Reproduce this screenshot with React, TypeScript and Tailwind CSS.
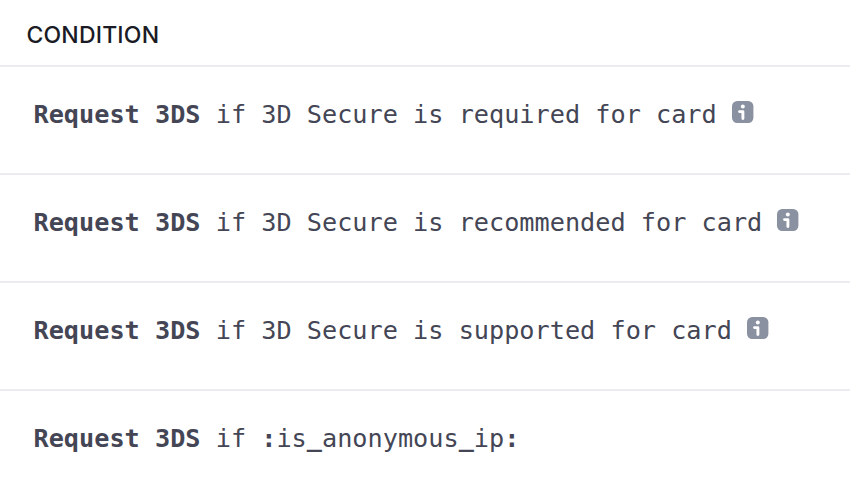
import React from "react";

const rules = [
  { text: "3D Secure is required for card", info: true },
  { text: "3D Secure is recommended for card", info: true },
  { text: "3D Secure is supported for card", info: true },
  { text: ":is_anonymous_ip:", info: false },
];

function InfoIcon() {
  return (
    <svg width="22" height="22" viewBox="0 0 22 22" className="ml-[15px] mt-[2px] shrink-0">
      <rect width="21.4" height="22" rx="5.2" fill="#8a91a0" />
      <circle cx="10.8" cy="5.5" r="2" fill="#fff" />
      <path d="M7.5 10.6h3.4v6.9" fill="none" stroke="#fff" strokeWidth="2.9" strokeLinecap="round" strokeLinejoin="round" />
    </svg>
  );
}

function Expression({ text }: { text: string }) {
  return (
    <span>
      {text.split(/([:_])/).map((part, i) => {
        if (part === ":") return <b key={i}>{part}</b>;
        if (part === "_") return <b key={i} className="relative -top-px">{part}</b>;
        return part;
      })}
    </span>
  );
}

export default function App() {
  return (
    <main className="h-[496px] w-[850px] overflow-hidden bg-white">
      <header className="flex h-[67px] items-center border-b-2 border-[#ebebf1] pl-[26.4px] pt-[5px] font-['Inter',sans-serif] text-[23px] font-[450] tracking-[0.2px] text-[#1a1b25]">
        CONDITION
      </header>
      {rules.map((rule) => (
        <div
          key={rule.text}
          className="flex h-[108px] items-start whitespace-pre border-b-2 border-[#ebebf1] pl-[33.5px] pt-[32px] font-['DejaVu_Sans_Mono',monospace] text-[25.22px] leading-[32px] text-[#444655]"
        >
          <b>Request 3DS</b>
          <span> if </span>
          <Expression text={rule.text} />
          {rule.info && <InfoIcon />}
        </div>
      ))}
    </main>
  );
}
